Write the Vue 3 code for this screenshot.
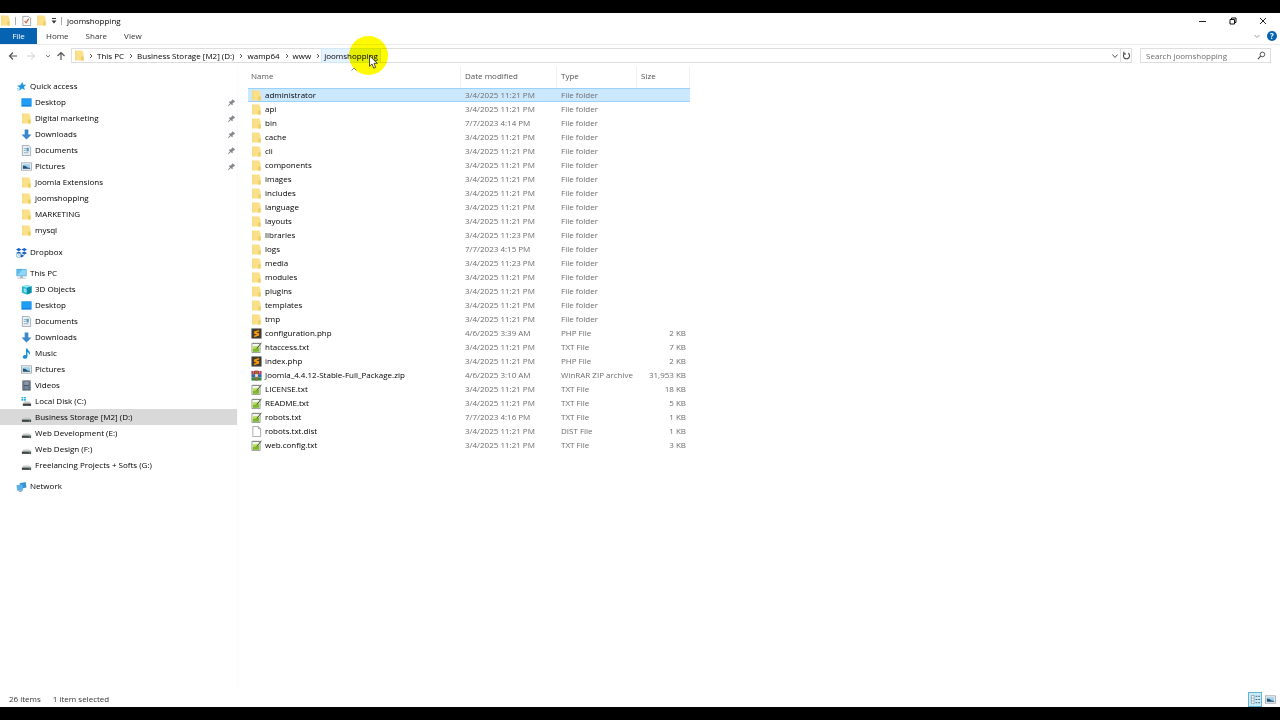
<script setup>
import { ref } from 'vue';

const tabs = ['Home', 'Share', 'View'];
const crumbs = ['This PC', 'Business Storage [M2] (D:)', 'wamp64', 'www', 'joomshopping'];
const search = ref('');
const selectedFile = ref('administrator');
const selectedPlace = ref('Business Storage [M2] (D:)');

const groups = [
  {
    name: 'Quick access',
    icon: 'star',
    items: [
      { name: 'Desktop', icon: 'desktop', pinned: true },
      { name: 'Digital marketing', icon: 'folder', pinned: true },
      { name: 'Downloads', icon: 'download', pinned: true },
      { name: 'Documents', icon: 'document', pinned: true },
      { name: 'Pictures', icon: 'picture', pinned: true },
      { name: 'Joomla Extensions', icon: 'folder' },
      { name: 'joomshopping', icon: 'folder' },
      { name: 'MARKETING', icon: 'folder' },
      { name: 'mysql', icon: 'folder' },
    ],
  },
  { name: 'Dropbox', icon: 'dropbox', items: [] },
  {
    name: 'This PC',
    icon: 'pc',
    items: [
      { name: '3D Objects', icon: 'cube' },
      { name: 'Desktop', icon: 'desktop' },
      { name: 'Documents', icon: 'document' },
      { name: 'Downloads', icon: 'download' },
      { name: 'Music', icon: 'music' },
      { name: 'Pictures', icon: 'picture' },
      { name: 'Videos', icon: 'video' },
      { name: 'Local Disk (C:)', icon: 'sysdrive' },
      { name: 'Business Storage [M2] (D:)', icon: 'drive' },
      { name: 'Web Development (E:)', icon: 'drive' },
      { name: 'Web Design (F:)', icon: 'drive' },
      { name: 'Freelancing Projects + Softs (G:)', icon: 'drive' },
    ],
  },
  { name: 'Network', icon: 'network', items: [] },
];

const folder = (name, date = '3/4/2025 11:21 PM') => ({ name, date, type: 'File folder', size: '', icon: 'folder' });
const txt = (name, size, date = '3/4/2025 11:21 PM') => ({ name, date, type: 'TXT File', size, icon: 'txt' });

const files = [
  folder('administrator'),
  folder('api'),
  folder('bin', '7/7/2023 4:14 PM'),
  folder('cache'),
  folder('cli'),
  folder('components'),
  folder('images'),
  folder('includes'),
  folder('language'),
  folder('layouts'),
  folder('libraries', '3/4/2025 11:23 PM'),
  folder('logs', '7/7/2023 4:15 PM'),
  folder('media', '3/4/2025 11:23 PM'),
  folder('modules'),
  folder('plugins'),
  folder('templates'),
  folder('tmp'),
  { name: 'configuration.php', date: '4/6/2025 3:39 AM', type: 'PHP File', size: '2 KB', icon: 'php' },
  txt('htaccess.txt', '7 KB'),
  { name: 'index.php', date: '3/4/2025 11:21 PM', type: 'PHP File', size: '2 KB', icon: 'php' },
  { name: 'Joomla_4.4.12-Stable-Full_Package.zip', date: '4/6/2025 3:10 AM', type: 'WinRAR ZIP archive', size: '31,953 KB', icon: 'zip' },
  txt('LICENSE.txt', '18 KB'),
  txt('README.txt', '5 KB'),
  txt('robots.txt', '1 KB', '7/7/2023 4:16 PM'),
  { name: 'robots.txt.dist', date: '3/4/2025 11:21 PM', type: 'DIST File', size: '1 KB', icon: 'blank' },
  txt('web.config.txt', '3 KB'),
];
</script>

<template>
  <div class="explorer">
    <svg class="sprite" aria-hidden="true">
      <symbol id="folder" viewBox="0 0 12 12">
        <path d="M1.500.5h8v2l1 1v8h-9z" fill="#fbe08a" />
        <path d="M1.500.5h1v11h-1z" fill="#f3d373" />
        <path d="M8 7h2.500v4.500H8z" fill="#f0cb62" />
      </symbol>
      <symbol id="star" viewBox="0 0 12 12">
        <path d="M6.800 1l1.200 3.200 3.200-.2-2.500 2.300 1 3.500-3-1.700-3.200 2.400.5-3.300L1 5.200l3.700-.6z" fill="#2196e3" />
        <path d="M1 8.500h2M1.500 10h1.500" stroke="#7cc4f2" />
      </symbol>
      <symbol id="desktop" viewBox="0 0 12 12">
        <rect x=".5" y="1.500" width="11" height="9" fill="#0f7fd8" />
        <rect x="1" y="2" width="10" height="7" fill="#1e9df5" />
      </symbol>
      <symbol id="download" viewBox="0 0 12 12">
        <path d="M4 .5h4V6h3.500L6 11.500.5 6H4z" fill="#3a87cb" />
      </symbol>
      <symbol id="document" viewBox="0 0 12 12">
        <path d="M1.500.5h7l2 2v9h-9z" fill="#eef2f5" stroke="#8c979f" stroke-width=".8" />
        <path d="M3 4h3M3 6h2M3 8.500h5" stroke="#8aa5b8" />
        <path d="M6 3h2.500v4H6z" fill="#4e9ccb" />
      </symbol>
      <symbol id="picture" viewBox="0 0 12 12">
        <rect x=".5" y="2" width="11" height="8" fill="#eef3f6" stroke="#929ba2" stroke-width=".8" />
        <rect x="2" y="3.500" width="8" height="5" fill="#9fd0ec" />
        <path d="M2 8.500V5l3 .5 2 1.500 3 .5v1z" fill="#245470" />
      </symbol>
      <symbol id="dropbox" viewBox="0 0 12 12">
        <path d="M3 1l3 1.800-3 1.800L0 2.800zM9 1l3 1.800-3 1.800-3-1.800zM3 4.800l3 1.800-3 1.800L0 6.600zM9 4.800l3 1.800-3 1.800-3-1.800zM6 8l3 1.500-3 2-2-1.500z" fill="#1a61c4" />
        <circle cx="2.800" cy="9.200" r="2.300" fill="#fff" stroke="#5c9fc4" stroke-width=".8" />
        <path d="M2.800 8v1.300h1" fill="none" stroke="#5c9fc4" stroke-width=".7" />
      </symbol>
      <symbol id="pc" viewBox="0 0 12 12">
        <rect x=".5" y="1" width="11" height="8" fill="#4d9cc7" />
        <path d="M1.200 1.700h9.600v6.500H1.200z" fill="#5dbdf0" />
        <path d="M1.200 8.200l6-6.500h3.600v6.500z" fill="#8ed6f7" />
        <path d="M4.500 9h3v1.500h3v1h-9v-1h3z" fill="#a5b1b8" />
      </symbol>
      <symbol id="cube" viewBox="0 0 12 12">
        <path d="M1 2.500L6.500 1l5 1.500v7l-5 2-5.500-2z" fill="#27b8cf" />
        <path d="M1 2.500L6.500 1l5 1.500-5 1.500z" fill="#a4ebf3" />
        <path d="M6.500 4l5-1.500v7l-5 2z" fill="#0c8fa8" />
        <path d="M3 4.500l3 1v4l-3-1z" fill="#8fe3ee" />
      </symbol>
      <symbol id="music" viewBox="0 0 12 12">
        <path d="M5.500.5h1.500c.3 2 3 2.500 2.800 5.500l-.8 1.500C9 5.500 8 4.700 7 4.500V9.500a2.500 2 0 1 1-1.500-1.700z" fill="#1a8fd6" />
      </symbol>
      <symbol id="video" viewBox="0 0 12 12">
        <rect x="1.500" y=".5" width="9" height="11" fill="#4b5259" />
        <rect x="3.500" y="1.500" width="5" height="4" fill="#8699b3" />
        <rect x="3.500" y="6.500" width="5" height="4" fill="#6d87a8" />
        <path d="M2.500 1v10M9.500 1v10" stroke="#c3cad0" stroke-dasharray="1 1" stroke-width=".8" />
      </symbol>
      <symbol id="drive" viewBox="0 0 12 12">
        <path d="M2.500 6h7L11 8.500H1z" fill="#c6c9cb" />
        <rect x="1" y="8.300" width="10" height="2.500" fill="#3f4345" />
        <path d="M8.500 9.500h1.500" stroke="#5fd16b" stroke-width=".8" />
      </symbol>
      <symbol id="sysdrive" viewBox="0 0 12 12">
        <path d="M3.500 6h6L11 8.500H2z" fill="#c6c9cb" />
        <rect x="2" y="8.300" width="9" height="2.500" fill="#3f4345" />
        <path d="M.5 1h2v1.700h-2zM3.200 1h2v1.700h-2zM.5 3.400h2v1.700h-2zM3.200 3.400h2v1.700h-2z" fill="#20b0dc" />
      </symbol>
      <symbol id="network" viewBox="0 0 12 12">
        <path d="M4 2.500L10.500 1l1 6L5 8.500z" fill="#3a91cf" />
        <path d="M.5 4.500l6.500-1 .8 6-6.300 1.500z" fill="#58b2e8" />
        <path d="M3 11l4-1v1.200L4 11.800z" fill="#4f7590" />
      </symbol>
      <symbol id="pin" viewBox="0 0 12 12">
        <path d="M7.500 1.500l3.500 3.500-1 .6-.8-.1L7.500 7.300l.1 1.700-.8.8L5 8 2 11l-.8-.8L4 7.100 2.300 5.300l.8-.8 1.700.1 2-1.800z" fill="#83898e" />
      </symbol>
      <symbol id="php" viewBox="0 0 12 12">
        <rect x=".5" y=".5" width="11" height="11" fill="#403c38" />
        <path d="M8.800 2.200v1.700L5.700 4.900l3.100.9v2.500L3.400 10V8.300l3.100-1-3.100-.9V3.900z" fill="#ff9a00" />
      </symbol>
      <symbol id="txt" viewBox="0 0 12 12">
        <path d="M1 1.500h9v10H1z" fill="#f4f7ee" stroke="#7d8577" stroke-width=".8" />
        <path d="M2 1.500h8" stroke="#555" stroke-dasharray="1 1" />
        <path d="M2 5l6-1v6.500H2z" fill="#b5de58" />
        <path d="M2 8l7-2v4.500H2z" fill="#7fb733" />
        <path d="M11.300.8L6.500 7" stroke="#3c4236" />
      </symbol>
      <symbol id="zip" viewBox="0 0 12 12">
        <rect x=".5" y="1" width="11" height="3.500" fill="#b6304a" />
        <rect x=".5" y="4.500" width="11" height="3.500" fill="#3563b5" />
        <rect x=".5" y="8" width="11" height="3.500" fill="#2c8a43" />
        <rect x="4.500" y=".5" width="3" height="11" fill="#9c6a3d" />
        <rect x="4.500" y="4.500" width="3" height="3" fill="#f2e5c4" />
        <path d="M2.500 1v3M9.500 1v3" stroke="#e9dfe0" stroke-width=".6" />
      </symbol>
      <symbol id="blank" viewBox="0 0 12 12">
        <path d="M2 .5h6l2.500 2.500v8.500H2z" fill="#fff" stroke="#8e8e8e" stroke-width=".8" />
        <path d="M8 .5V3h2.500" fill="none" stroke="#8e8e8e" stroke-width=".8" />
      </symbol>
      <symbol id="check" viewBox="0 0 12 12">
        <path d="M2 1.500h6l2.500 2v8H2z" fill="#fff" stroke="#8b8b8b" stroke-width=".8" />
        <path d="M4 6.500L5.500 8.500 8.500 4" fill="none" stroke="#d8623a" stroke-width="1.300" />
      </symbol>
    </svg>

    <header class="titlebar">
      <svg class="icon"><use href="#folder" /></svg>
      <span class="rule"></span>
      <button class="quick" aria-label="Properties"><svg class="icon"><use href="#check" /></svg></button>
      <button class="quick" aria-label="New folder"><svg class="icon"><use href="#folder" /></svg></button>
      <button class="quick more" aria-label="Customize toolbar">
        <svg viewBox="0 0 6 6"><path d="M1 .5h4" stroke="#333" /><path d="M.5 2.500h5L3 5.500z" fill="#333" /></svg>
      </button>
      <span class="rule"></span>
      <h1>joomshopping</h1>
      <div class="window-buttons">
        <button aria-label="Minimize"><svg viewBox="0 0 8 8"><path d="M0 4.500h7" stroke="#222" /></svg></button>
        <button aria-label="Restore">
          <svg viewBox="0 0 8 8"><path d="M1 2.500h4.500V7H1zM2.500 2.500V1H7v4.500H5.500" fill="none" stroke="#111" /></svg>
        </button>
        <button aria-label="Close"><svg viewBox="0 0 8 8"><path d="M1 1l6 6M7 1L1 7" stroke="#222" /></svg></button>
      </div>
    </header>

    <nav class="ribbon">
      <button class="file">File</button>
      <button v-for="tab in tabs" :key="tab" class="tab">{{ tab }}</button>
      <button class="expand" aria-label="Expand ribbon">
        <svg viewBox="0 0 8 8"><path d="M1.500 3L4 5.500 6.500 3" fill="none" stroke="#999" /></svg>
      </button>
      <button class="help" aria-label="Help">?</button>
    </nav>

    <div class="address-row">
      <div class="history">
        <button aria-label="Back">
          <svg viewBox="0 0 10 10"><path d="M9 5H1.500M5 1.500L1.500 5 5 8.500" fill="none" stroke="#555" stroke-width="1.200" /></svg>
        </button>
        <button aria-label="Forward">
          <svg viewBox="0 0 10 10"><path d="M1 5h7.500M5 1.500L8.500 5 5 8.500" fill="none" stroke="#ccc" /></svg>
        </button>
        <button class="recent" aria-label="Recent locations">
          <svg viewBox="0 0 8 8"><path d="M2 3l2 2 2-2" fill="none" stroke="#777" /></svg>
        </button>
        <button aria-label="Up">
          <svg viewBox="0 0 10 10"><path d="M5 9V1.500M1.500 5L5 1.500 8.500 5" fill="none" stroke="#555" stroke-width="1.200" /></svg>
        </button>
      </div>
      <div class="address">
        <svg class="icon"><use href="#folder" /></svg>
        <template v-for="(crumb, i) in crumbs" :key="crumb">
          <svg class="chevron" viewBox="0 0 6 6"><path d="M2 1l2 2-2 2" fill="none" stroke="#555" /></svg>
          <a href="#" class="crumb" :class="{ hovered: i === crumbs.length - 1 }" @click.prevent>
            {{ crumb }}
            <span v-if="i === crumbs.length - 1" class="spotlight"></span>
            <svg v-if="i === crumbs.length - 1" class="pointer" viewBox="0 0 9 14">
              <path d="M.5.8v10.500L3 9l1.700 4.200 1.900-.8L5 8.300h3.300z" fill="#fff" stroke="#222" stroke-width=".8" />
            </svg>
          </a>
        </template>
        <button class="drop" aria-label="Previous locations">
          <svg viewBox="0 0 8 8"><path d="M1.500 2.500L4 5.500l2.500-3" fill="none" stroke="#555" /></svg>
        </button>
        <button class="refresh" aria-label="Refresh">
          <svg viewBox="0 0 10 10">
            <path d="M7 2.500A3.400 3.400 0 1 1 3 2.500M2 .8v2.500h2.500" fill="none" stroke="#444" stroke-width="1.200" />
          </svg>
        </button>
      </div>
      <label class="search">
        <input v-model="search" type="text" placeholder="Search joomshopping" aria-label="Search joomshopping" />
        <svg viewBox="0 0 10 10"><circle cx="6" cy="3.800" r="2.600" fill="none" stroke="#444" /><path d="M4 5.700L1 9" stroke="#444" stroke-width="1.200" /></svg>
      </label>
    </div>

    <main class="content">
      <aside class="places">
        <ul v-for="group in groups" :key="group.name">
          <li>
            <button class="place root">
              <svg class="icon"><use :href="'#' + group.icon" /></svg>
              <span>{{ group.name }}</span>
            </button>
          </li>
          <li v-for="item in group.items" :key="item.name">
            <button class="place" :class="{ selected: item.name === selectedPlace }" @click="selectedPlace = item.name">
              <svg class="icon"><use :href="'#' + item.icon" /></svg>
              <span>{{ item.name }}</span>
              <svg v-if="item.pinned" class="pin"><use href="#pin" /></svg>
            </button>
          </li>
        </ul>
      </aside>

      <section class="files">
        <table>
          <colgroup>
            <col class="col-name" />
            <col class="col-date" />
            <col class="col-type" />
            <col class="col-size" />
          </colgroup>
          <thead>
            <tr>
              <th class="sorted">
                Name
                <svg class="sort" viewBox="0 0 8 4"><path d="M1.500 3.500L4 1l2.500 2.500" fill="none" stroke="#666" stroke-width=".8" /></svg>
              </th>
              <th>Date modified</th>
              <th>Type</th>
              <th>Size</th>
            </tr>
          </thead>
          <tbody>
            <tr
              v-for="file in files"
              :key="file.name"
              :class="{ selected: file.name === selectedFile }"
              @click="selectedFile = file.name"
            >
              <td class="name">
                <div class="file-name">
                  <svg class="icon"><use :href="'#' + file.icon" /></svg>
                  <span>{{ file.name }}</span>
                </div>
              </td>
              <td>{{ file.date }}</td>
              <td>{{ file.type }}</td>
              <td class="size">{{ file.size }}</td>
            </tr>
          </tbody>
        </table>
      </section>
    </main>

    <footer class="status">
      <span>{{ files.length }} items</span>
      <span>1 item selected</span>
      <div class="views">
        <button class="active" aria-label="Details view">
          <svg viewBox="0 0 12 12">
            <path d="M1.500 1.500h3v9h-3zM1.500 4.500h3M1.500 7.500h3" fill="#fff" stroke="#7d98a5" stroke-width=".8" />
            <path d="M6 2.500h2M9 2.500h2M6 6h2M9 6h2M6 9.500h2M9 9.500h2" stroke="#456" />
          </svg>
        </button>
        <button aria-label="Large icons view"><svg viewBox="0 0 12 12"><use href="#picture" /></svg></button>
      </div>
    </footer>
  </div>
</template>

<style>
body {
  margin: 0;
  background: #000;
}
</style>

<style scoped>
.explorer {
  display: flex;
  flex-direction: column;
  box-sizing: border-box;
  min-height: 100vh;
  border-top: 13px solid #000;
  border-bottom: 13px solid #000;
  background: #fff;
  color: #000;
  font-family: "Open Sans", "Noto Sans", sans-serif;
  font-size: 8px;
  line-height: 14px;
}

.sprite {
  position: absolute;
  width: 0;
  height: 0;
}

button {
  display: flex;
  align-items: center;
  justify-content: center;
  padding: 0;
  border: 0;
  background: none;
  color: inherit;
  font: inherit;
}

.icon {
  flex: none;
  width: 11px;
  height: 11px;
}

.titlebar {
  display: flex;
  align-items: center;
  height: 15px;
}

.titlebar .rule {
  width: 1px;
  height: 8px;
  margin: 0 5px 0 4px;
  background: #aaa;
}

.quick {
  margin-right: 4px;
}

.quick.more {
  margin-right: 0;
}

.quick.more svg {
  width: 6px;
  height: 6px;
}

h1 {
  margin: 0;
  font-size: 8px;
  font-weight: 400;
}

.window-buttons {
  display: flex;
  gap: 22px;
  margin-left: auto;
  padding-right: 13px;
}

.window-buttons svg {
  width: 8px;
  height: 8px;
}

.ribbon {
  display: flex;
  align-items: center;
  height: 16px;
  border-bottom: 1px solid #ececec;
  color: #333;
}

.file {
  width: 37px;
  height: 16px;
  margin-right: 9px;
  background: #0663b1;
  color: #fff;
}

.tab {
  margin-right: 17px;
}

.expand {
  margin-left: auto;
}

.expand svg {
  width: 8px;
  height: 8px;
}

.help {
  width: 10px;
  height: 10px;
  margin: 0 3px 0 6px;
  border-radius: 50%;
  background: #0663b1;
  color: #fff;
  font-weight: 700;
  line-height: 10px;
}

.address-row {
  display: flex;
  align-items: center;
  gap: 8px;
  padding: 3px 9px 4px 8px;
}

.history {
  display: flex;
  align-items: center;
  gap: 8px;
  width: 55px;
}

.history svg {
  width: 10px;
  height: 10px;
}

.history .recent svg {
  width: 8px;
  height: 8px;
}

.history .recent {
  margin-right: -4px;
}

.address {
  display: flex;
  flex: 1;
  align-items: center;
  box-sizing: border-box;
  height: 15px;
  padding-left: 2px;
  border: 1px solid #dedede;
}

.chevron {
  width: 6px;
  height: 6px;
  margin: 0 1px 0 2px;
}

.crumb {
  position: relative;
  padding: 0 2px;
  color: #000;
  line-height: 13px;
  text-decoration: none;
}

.address .icon {
  margin-right: 1px;
}

.crumb.hovered {
  background: #e5f3ff;
  box-shadow: 0 0 0 1px #d3e9fa;
}

.spotlight {
  position: absolute;
  top: -13px;
  right: -8px;
  width: 39px;
  height: 39px;
  border-radius: 50%;
  background: #fffa00;
  mix-blend-mode: multiply;
}

.pointer {
  position: absolute;
  top: 6px;
  right: 2px;
  width: 9px;
  height: 14px;
}

.drop {
  width: 10px;
  height: 13px;
  margin-left: auto;
}

.drop svg {
  width: 8px;
  height: 8px;
}

.refresh {
  width: 11px;
  height: 13px;
  border-left: 1px solid #dedede;
}

.refresh svg {
  width: 9px;
  height: 9px;
}

.search {
  display: flex;
  align-items: center;
  box-sizing: border-box;
  width: 131px;
  height: 15px;
  padding: 0 4px 0 5px;
  border: 1px solid #dedede;
}

.search input {
  flex: 1;
  min-width: 0;
  padding: 0;
  border: 0;
  outline: 0;
  background: none;
  font: inherit;
}

.search input::placeholder {
  color: #6d6d6d;
  opacity: 1;
}

.search svg {
  width: 9px;
  height: 9px;
}

.content {
  display: flex;
  flex: 1;
}

.places {
  flex: none;
  width: 237px;
  padding-top: 11px;
  border-right: 1px solid #fafafa;
}

.places ul {
  margin: 0 0 5px;
  padding: 0;
  list-style: none;
}

.places ul:first-child {
  margin-bottom: 6px;
}

.place {
  justify-content: flex-start;
  gap: 3px;
  width: 100%;
  height: 16px;
  padding: 0 0 0 21px;
}

.place.root {
  padding-left: 16px;
}

.place.selected {
  background: #d9d9d9;
}

.pin {
  width: 9px;
  height: 9px;
  margin-left: auto;
  margin-right: 1px;
}

.files {
  flex: 1;
  padding-left: 10px;
}

table {
  width: 442px;
  border-collapse: separate;
  border-spacing: 0;
  table-layout: fixed;
}

.col-name {
  width: 213px;
}

.col-date {
  width: 96px;
}

.col-type {
  width: 80px;
}

.col-size {
  width: 53px;
}

th {
  height: 17px;
  padding: 0 0 4px 4px;
  border-right: 1px solid #f0f0f0;
  color: #555;
  font-weight: 400;
  text-align: left;
}

th.sorted {
  position: relative;
  padding-left: 3px;
}

.sort {
  position: absolute;
  top: 0;
  left: 48%;
  width: 8px;
  height: 4px;
}

td {
  height: 14px;
  padding: 0 4px;
  color: #6d6d6d;
  line-height: 14px;
  white-space: nowrap;
}

td.name {
  padding: 0 0 0 3px;
  color: #000;
}

td.size {
  text-align: right;
}

.file-name {
  display: flex;
  align-items: center;
  gap: 3px;
}

tr.selected td {
  background: #cce8ff;
  box-shadow: inset 0 1px #99d1ff, inset 0 -1px #99d1ff;
}

.status {
  display: flex;
  align-items: center;
  gap: 12px;
  height: 16px;
  padding: 0 3px 0 9px;
  color: #333;
}

.views {
  display: flex;
  gap: 1px;
  margin-left: auto;
}

.views button {
  box-sizing: border-box;
  width: 14px;
  height: 15px;
}

.views .active {
  border: 1px solid #5fb4d0;
  background: #c9ebf7;
}

.views svg {
  width: 11px;
  height: 11px;
}
</style>
